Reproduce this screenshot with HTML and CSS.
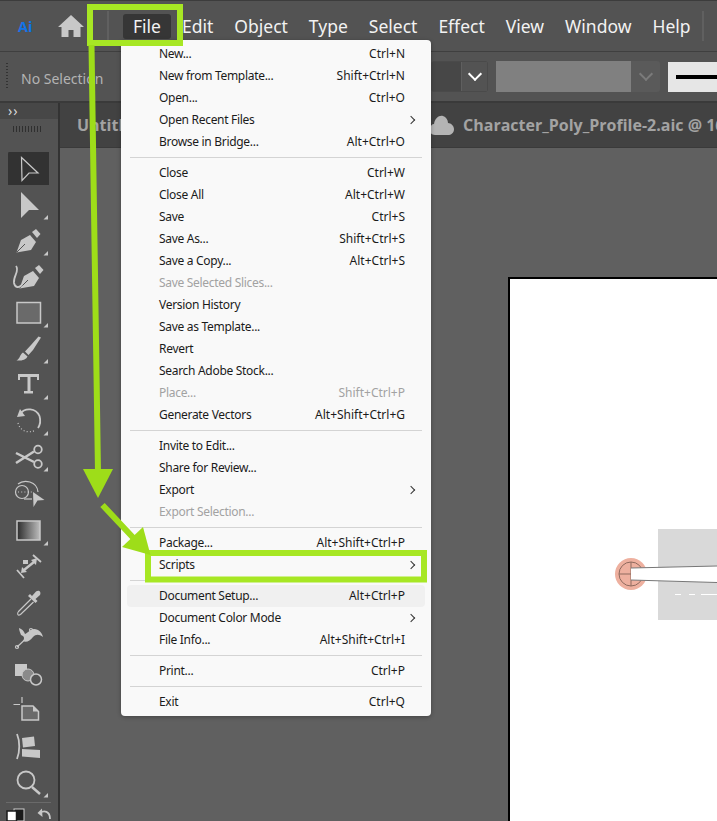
FILE: index.html
```html
<!DOCTYPE html>
<html>
    <head>
        <title>Illustrator File menu</title>
        <link rel="stylesheet" href="styles.css">
    </head>
    <body>
        <div id="app">
            <div class="top-bar">
                <span class="ai-logo">Ai</span>
                <svg class="home-icon" viewBox="0 0 26 22"><path d="M13 0 L26 12 L22.500 12 L22.500 22 L15.500 22 L15.500 15 L10.500 15 L10.500 22 L3.500 22 L3.500 12 L0 12 Z"/></svg>
                <span class="bar-sep"></span>
                <nav class="main-menu">
                    <span class="main-item active">File</span>
                    <span class="main-item">Edit</span>
                    <span class="main-item">Object</span>
                    <span class="main-item">Type</span>
                    <span class="main-item">Select</span>
                    <span class="main-item">Effect</span>
                    <span class="main-item">View</span>
                    <span class="main-item">Window</span>
                    <span class="main-item">Help</span>
                </nav>
                <span class="bar-sep end"></span>
            </div>

            <div class="options-bar">
                <span class="grip"></span>
                <span class="no-selection">No Selection</span>
                <div class="dropdown">
                    <span class="dropdown-chevron"></span>
                </div>
                <div class="style-field">
                    <span class="style-fill"></span>
                    <span class="style-button"><span class="dropdown-chevron off"></span></span>
                </div>
                <div class="stroke-box"><span class="stroke-line"></span></div>
            </div>

            <div class="main-row">
                <aside class="toolbar">
                    <div class="toolbar-head"><span class="collapse">&rsaquo;&rsaquo;</span></div>
                    <div class="toolbar-grip"></div>
                    <div class="tools">
                        <div class="tool selected">
                            <svg viewBox="8 151 42 36"><path class="line" d="M21.500 157.500 L38 173 L29 173 L22 180.500 Z"/></svg>
                        </div>
                        <div class="tool">
                            <svg viewBox="8 187 42 36"><path class="solid" d="M21 192 L39 210 L29 210 L21 218 Z"/><path class="solid" d="M43.500 219.500 L48 219.500 L48 215 Z"/></svg>
                        </div>
                        <div class="tool">
                            <svg viewBox="8 223 42 36"><path class="solid" d="M16.500 252.500 L21 240 L30 235 L36 242 L31 250 Z"/><path class="solid" d="M32 232 L36 229 L40.500 234 L37 238 Z"/><path class="cut" d="M17 252 L25 244"/><path class="solid" d="M43.500 255.500 L48 255.500 L48 251 Z"/></svg>
                        </div>
                        <div class="tool">
                            <svg viewBox="8 259 42 36"><path class="solid" d="M19.500 288.500 L24 276 L33 271 L39 278 L34 286 Z"/><path class="solid" d="M35 268 L39 265 L43.500 270 L40 274 Z"/><path class="cut" d="M20 288 L28 280"/><path class="line wide" d="M16 266 C20 271 13 276 14 283 C15 288 19 288 22 285"/></svg>
                        </div>
                        <div class="tool">
                            <svg viewBox="8 295 42 36"><rect class="box" x="17" y="302.500" width="23.500" height="20.500"/><path class="solid" d="M43.500 327.500 L48 327.500 L48 323 Z"/></svg>
                        </div>
                        <div class="tool">
                            <svg viewBox="8 331 42 36"><path class="solid" d="M38.500 336.500 L41 337.500 L33 350 L28.500 355 L25 351.500 L31 345 Z"/><path class="solid" d="M16.500 360.500 C20 359 20 354 23 352.500 L27.500 356.500 C26 360 21 361 16.500 360.500 Z"/><path class="solid" d="M43.500 363.500 L48 363.500 L48 359 Z"/></svg>
                        </div>
                        <div class="tool">
                            <svg viewBox="8 367 42 36"><path class="solid" d="M18 374 L39 374 L39 380 L37 380 L37 377 L30.500 377 L30.500 391 L33 391 L33 393.500 L24 393.500 L24 391 L27.500 391 L27.500 377 L20 377 L20 380 L18 380 Z"/><path class="solid" d="M43.500 399.500 L48 399.500 L48 395 Z"/></svg>
                        </div>
                        <div class="tool">
                            <svg viewBox="8 403 42 36"><path class="line wide" d="M20 414 C25 407 36 408 39.500 416 C41 421 40 425 38 428"/><path class="solid" d="M17 417 L20 409 L25 416 Z"/><path class="dots" d="M18 423 C20 431 28 434 36 430"/><path class="solid" d="M43.500 435.500 L48 435.500 L48 431 Z"/></svg>
                        </div>
                        <div class="tool">
                            <svg viewBox="8 439 42 36"><circle class="line wide" cx="38" cy="449.500" r="3.800"/><circle class="line wide" cx="38" cy="464" r="3.800"/><path class="thick" d="M16 463 L34 451.500 M16 453 L34 462"/><path class="solid" d="M43.500 471.500 L48 471.500 L48 467 Z"/></svg>
                        </div>
                        <div class="tool">
                            <svg viewBox="8 473 42 36"><circle class="line" cx="22" cy="490" r="6.500"/><path class="line" d="M18 482 C24 477 37 479 38 490"/><path class="line" d="M24 497 L32 497"/><path class="dots" d="M18 490 L34 490"/><path class="solid" d="M33 490 L44.500 498 L37.500 498.500 L33.500 505 Z"/></svg>
                        </div>
                        <div class="tool">
                            <svg viewBox="8 509 42 36"><defs><linearGradient id="tool-grad"><stop offset="0" stop-color="#2c2c2c"/><stop offset="1" stop-color="#bdbdbd"/></linearGradient></defs><rect class="box grad" x="17" y="519" width="23" height="19"/><path class="solid" d="M43.500 543.500 L48 543.500 L48 539 Z"/></svg>
                        </div>
                        <div class="tool">
                            <svg viewBox="8 545 42 36"><path class="line wide" d="M17 568 L24 576 M33 553 L41 560"/><path class="thick" d="M24 568 L34 560"/><path class="solid" d="M37 556 L36 563 L31 558 Z M21 571 L22 565 L27 570 Z"/><rect class="solid" x="23" y="558" width="5" height="4"/></svg>
                        </div>
                        <div class="tool">
                            <svg viewBox="8 581 42 36"><path class="line" d="M31 597 L18.500 609.500 C16.500 612 18 614 20.500 612.500 L33.500 600"/><path class="solid" d="M28 594 L30 592 L32 594 L36 589.500 C39 587.500 41.500 590 40 593 L35.500 597 L37.500 599 L35.500 601 Z"/></svg>
                        </div>
                        <div class="tool">
                            <svg viewBox="8 617 42 36"><path class="solid" d="M19 626 C22 627 24 629 25 632 C28 631 30 627 34 627 C39 627 42 631 43 635 C39 632 36 632 33 635 C30 639 26 641 23 639 C25 636 24 634 21 633 C20 630 19 628 19 626 Z"/><path class="line" d="M17 645 L31 632"/><circle class="line" cx="17" cy="645" r="1.500"/><circle class="line" cx="31" cy="628" r="1.500"/></svg>
                        </div>
                        <div class="tool">
                            <svg viewBox="8 653 42 36"><rect class="solid" x="15" y="662" width="12" height="12"/><circle class="mid" cx="28" cy="673" r="6"/><circle class="ring" cx="36" cy="677.500" r="5.500"/></svg>
                        </div>
                        <div class="tool">
                            <svg viewBox="8 689 42 36"><path class="line" d="M22 695 L22 701 M13.500 702.500 L20 702.500"/><path class="box" d="M22 704 L33 704 L38.500 709.500 L38.500 718 L22 718 Z"/><path class="solid" d="M33 704 L38.500 709.500 L33 709.500 Z"/></svg>
                        </div>
                        <div class="tool">
                            <svg viewBox="8 725 42 36"><path class="line wide" d="M17 732 C20 739 20 750 17 757"/><path class="solid" d="M22 736 L34 734.500 L35 744 L23 745.500 Z"/><path class="solid" d="M22 747 L40 748 L40 756 L22 754.500 Z"/></svg>
                        </div>
                        <div class="tool">
                            <svg viewBox="8 761 42 36"><circle class="line wide" cx="26" cy="778" r="8.500"/><path class="thick" d="M32 785 L40 792"/><path class="solid" d="M43.500 795.500 L48 795.500 L48 791 Z"/></svg>
                        </div>
                    </div>
                    <div class="toolbar-sep"></div>
                    <div class="swatches">
                        <svg class="fill-stroke" viewBox="6 806 20 15"><rect x="14" y="809" width="10" height="12" fill="#1a1a1a" stroke="#d0d0d0"/><rect x="7" y="811" width="9.500" height="10" fill="#fff" stroke="#1a1a1a" stroke-width="1.500"/></svg>
                        <svg class="undo" viewBox="36 808 16 13"><path class="line wide" d="M40 815 C44 812 50 813 50 821"/><path class="solid" d="M37.500 815 L42 810.500 L42.500 819 Z"/></svg>
                    </div>
                </aside>

                <section class="workspace">
                    <div class="tab-bar">
                        <span class="tab first">Untitled-1</span>
                        <svg class="cloud" viewBox="0 0 24 20"><path d="M5 20 C1 20 0 17 0 14 C0 11 2 9 4 9 C5 3 9 0 13 1 C16 2 18 5 18 8 C21 8 24 11 24 14 C24 18 21 20 18 20 Z"/></svg>
                        <span class="tab">Character_Poly_Profile-2.aic @ 16</span>
                    </div>
                    <div class="canvas">
                        <div class="artboard">
                            <div class="grey-shape"></div>
                            <svg class="handle" viewBox="0 0 105 40"><circle cx="16" cy="19" r="16" fill="#eeb09f"/><circle cx="16" cy="19" r="12" fill="none" stroke="#8f6a5e" stroke-width="1"/><path d="M4 19 L16 19 M16 7 L16 31" stroke="#8f6a5e" fill="none"/><path d="M16 13 L102 11 L102 27.500 L16 25 Z" fill="#fff"/><path d="M16 13 L102 11 M16 25 L102 27.500" stroke="#777" stroke-width="1" fill="none"/><path d="M60 39.500 L66 39.500 M74 39.500 L80 39.500 M86 39.500 L102 39.500" stroke="#fff" fill="none"/></svg>
                        </div>
                    </div>
                </section>
            </div>

            <div class="file-menu">
                <div class="item"><span>New...</span><span class="keys">Ctrl+N</span></div>
                <div class="item"><span>New from Template...</span><span class="keys">Shift+Ctrl+N</span></div>
                <div class="item"><span>Open...</span><span class="keys">Ctrl+O</span></div>
                <div class="item"><span>Open Recent Files</span><span class="more"></span></div>
                <div class="item"><span>Browse in Bridge...</span><span class="keys">Alt+Ctrl+O</span></div>
                <div class="sep"></div>
                <div class="item"><span>Close</span><span class="keys">Ctrl+W</span></div>
                <div class="item"><span>Close All</span><span class="keys">Alt+Ctrl+W</span></div>
                <div class="item"><span>Save</span><span class="keys">Ctrl+S</span></div>
                <div class="item"><span>Save As...</span><span class="keys">Shift+Ctrl+S</span></div>
                <div class="item"><span>Save a Copy...</span><span class="keys">Alt+Ctrl+S</span></div>
                <div class="item off"><span>Save Selected Slices...</span></div>
                <div class="item"><span>Version History</span></div>
                <div class="item"><span>Save as Template...</span></div>
                <div class="item"><span>Revert</span></div>
                <div class="item"><span>Search Adobe Stock...</span></div>
                <div class="item off"><span>Place...</span><span class="keys">Shift+Ctrl+P</span></div>
                <div class="item"><span>Generate Vectors</span><span class="keys">Alt+Shift+Ctrl+G</span></div>
                <div class="sep"></div>
                <div class="item"><span>Invite to Edit...</span></div>
                <div class="item"><span>Share for Review...</span></div>
                <div class="item"><span>Export</span><span class="more"></span></div>
                <div class="item off"><span>Export Selection...</span></div>
                <div class="sep"></div>
                <div class="item"><span>Package...</span><span class="keys">Alt+Shift+Ctrl+P</span></div>
                <div class="item"><span>Scripts</span><span class="more"></span></div>
                <div class="sep"></div>
                <div class="item hover"><span>Document Setup...</span><span class="keys">Alt+Ctrl+P</span></div>
                <div class="item"><span>Document Color Mode</span><span class="more"></span></div>
                <div class="item"><span>File Info...</span><span class="keys">Alt+Shift+Ctrl+I</span></div>
                <div class="sep"></div>
                <div class="item"><span>Print...</span><span class="keys">Ctrl+P</span></div>
                <div class="sep"></div>
                <div class="item"><span>Exit</span><span class="keys">Ctrl+Q</span></div>
            </div>

            <!-- green callouts drawn over the screenshot -->
            <svg class="callouts" viewBox="0 0 717 821">
                <rect class="frame" x="90" y="7" width="90" height="36"/>
                <path d="M91.500 45 L98 472 M102.500 505 L140 545"/>
                <rect class="frame" x="148" y="553" width="276" height="26.500"/>
                <path class="head" d="M83 469 L113 469 L98 498 Z"/>
                <path class="head" d="M143 527 L150.500 555 L122 547 Z"/>
            </svg>
        </div>
    </body>
</html>
```

FILE: styles.css
```css
*{
    box-sizing: border-box;
}
html, body{
    margin: 0;
    padding: 0;
}
#app{
    position: relative;
    display: flex;
    flex-direction: column;
    width: 717px;
    height: 821px;
    overflow: hidden;
    background-color: #606060;
    font-family: "Noto Sans", "Open Sans", sans-serif;
}

/* top menu bar */
.top-bar{
    display: flex;
    align-items: center;
    flex: none;
    height: 52px;
    background-color: #535353;
    border-top: 1px solid #3c3c3c;
    border-bottom: 1px solid #3f3f3f;
}
.ai-logo{
    flex: none;
    margin-left: 18px;
    width: 40px;
    color: #1473e6;
    font-family: "Open Sans", sans-serif;
    font-size: 14.500px;
    font-weight: 700;
}
.home-icon{
    flex: none;
    width: 26px;
    height: 22px;
    fill: #c8c8c8;
}
.bar-sep{
    flex: none;
    width: 2px;
    height: 30px;
    margin-left: 23px;
    background-color: #606060;
}
.bar-sep.end{
    margin-left: 1px;
}
.main-menu{
    display: flex;
    flex: none;
    margin-left: 14px;
    gap: 1px;
}
.main-item{
    padding: 0 10px;
    height: 25px;
    line-height: 25px;
    color: #f2f2f2;
    font-size: 17.500px;
    border-radius: 3px;
}
.main-item.active{
    background-color: #363636;
}

/* options bar */
.options-bar{
    display: flex;
    align-items: center;
    flex: none;
    height: 51px;
    background-color: #535353;
    border-bottom: 2px solid #3a3a3a;
}
.grip{
    width: 2px;
    height: 27px;
    margin-left: 6px;
    background-image: linear-gradient(#333 50%, transparent 50%);
    background-size: 2px 3px;
}
.no-selection{
    margin: 3px 0 0 13px;
    width: 410px;
    color: #b4b4b4;
    font-size: 14px;
}
.dropdown{
    display: flex;
    justify-content: flex-end;
    width: 57px;
    height: 31px;
    background-color: #474747;
    border: 1px solid #4a4a4a;
    border-radius: 3px;
}
.dropdown-chevron{
    display: block;
    position: relative;
    width: 26px;
    border-left: 1px solid #5f5f5f;
    background-color: #535353;
}
.dropdown-chevron::after{
    content: "";
    position: absolute;
    left: 8px;
    top: 7px;
    width: 8px;
    height: 8px;
    border-right: 2px solid #fff;
    border-bottom: 2px solid #fff;
    transform: rotate(45deg);
}
.dropdown-chevron.off{
    border: none;
    background: none;
    width: 29px;
    height: 31px;
}
.dropdown-chevron.off::after{
    left: 10px;
    top: 8px;
    border-color: #7b7b7b;
}
.style-field{
    display: flex;
    width: 164px;
    height: 31px;
    margin-left: 8px;
}
.style-fill{
    width: 135px;
    background-color: #808080;
}
.style-button{
    width: 29px;
    background-color: #5a5a5a;
    border-radius: 0 3px 3px 0;
}
.stroke-box{
    display: flex;
    align-items: center;
    flex: 1;
    height: 30px;
    margin-left: 8px;
    padding-left: 8px;
    background-color: #e6e6e6;
}
.stroke-line{
    display: block;
    width: 100%;
    height: 4px;
    background-color: #000;
}

/* left tools */
.main-row{
    display: flex;
    flex: 1;
    min-height: 0;
}
.toolbar{
    flex: none;
    width: 60px;
    background-color: #535353;
    border-right: 2px solid #333;
}
.toolbar-head{
    height: 16px;
    background-color: #474747;
}
.collapse{
    display: block;
    margin-left: 8px;
    color: #d8d8d8;
    font-size: 14px;
    line-height: 16px;
    letter-spacing: 1px;
}
.toolbar-grip{
    width: 29px;
    height: 6px;
    margin: 7px 0 0 13px;
    background-image: linear-gradient(90deg, #2f2f2f 1px, transparent 1px);
    background-size: 3px 6px;
}
.tools{
    margin-top: 19px;
    padding-left: 8px;
}
.tool{
    width: 42px;
    height: 36px;
}
.tool svg{
    display: block;
    width: 42px;
    height: 36px;
}
.tool.selected{
    background: linear-gradient(#323232, #323232) no-repeat 0 1px / 41px 33px;
    border-radius: 3px;
}
.solid{
    fill: #c8c8c8;
}
.line{
    fill: none;
    stroke: #c8c8c8;
    stroke-width: 1.200;
}
.line.wide{
    stroke-width: 1.800;
}
.thick{
    fill: none;
    stroke: #c8c8c8;
    stroke-width: 2.500;
}
.cut{
    fill: none;
    stroke: #535353;
    stroke-width: 1;
}
.dots{
    fill: none;
    stroke: #c8c8c8;
    stroke-width: 1.200;
    stroke-dasharray: 1 2.200;
}
.box{
    fill: #6a6a6a;
    stroke: #c8c8c8;
    stroke-width: 1.500;
}
.box.grad{
    fill: url(#tool-grad);
}
.mid{
    fill: #8a8a8a;
    stroke: #c8c8c8;
}
.ring{
    fill: #535353;
    stroke: #c8c8c8;
    stroke-width: 1.500;
}
.toolbar-sep{
    width: 45px;
    height: 1px;
    margin: 3px 0 0 6px;
    background-color: #6a6a6a;
}
.swatches{
    display: flex;
    justify-content: space-between;
    margin-top: 3px;
    padding: 0 6px;
}
.fill-stroke{
    width: 20px;
    height: 15px;
}
.undo{
    width: 16px;
    height: 13px;
}

/* document area */
.workspace{
    display: flex;
    flex-direction: column;
    flex: 1;
    min-width: 0;
}
.tab-bar{
    display: flex;
    align-items: center;
    flex: none;
    height: 45px;
    background-color: #424242;
    border-bottom: 1px solid #3a3a3a;
    white-space: nowrap;
    overflow: hidden;
}
.tab{
    flex: none;
    color: #a3a3a3;
    font-family: "Open Sans", sans-serif;
    font-size: 16px;
    font-weight: 700;
}
.tab.first{
    margin-left: 17px;
    width: 353px;
}
.cloud{
    flex: none;
    width: 24px;
    height: 20px;
    margin-right: 9px;
    fill: #b4b4b4;
}
.canvas{
    position: relative;
    flex: 1;
}
.artboard{
    position: absolute;
    left: 448px;
    top: 129px;
    width: 300px;
    height: 700px;
    background-color: #fff;
    border: 2px solid #000;
}
.grey-shape{
    position: absolute;
    left: 148px;
    top: 250px;
    width: 100px;
    height: 91px;
    background-color: #d9d9d9;
}
.handle{
    position: absolute;
    left: 105px;
    top: 276px;
    width: 105px;
    height: 40px;
}

/* file dropdown */
.file-menu{
    position: absolute;
    left: 121px;
    top: 40px;
    width: 310px;
    height: 676px;
    padding: 3px 6px;
    background-color: #f9f9f9;
    border-radius: 4px;
    box-shadow: 0 1px 4px rgba(0, 0, 0, 0.3);
    color: #1b1b1b;
    font-size: 12px;
}
.item{
    display: flex;
    justify-content: space-between;
    align-items: center;
    position: relative;
    height: 22px;
    padding: 0 20px 2px 32px;
    border-radius: 4px;
    letter-spacing: -0.3px;
    white-space: nowrap;
}
.keys{
    letter-spacing: 0;
}
.item.off{
    color: #a2a2a2;
}
.item.hover{
    background-color: #f0f0f0;
}
.sep{
    height: 1px;
    margin: 4px 3px;
    background-color: #d4d4d4;
}
.more{
    position: absolute;
    right: 11px;
    top: 8px;
    width: 6px;
    height: 6px;
    border-top: 1px solid #333;
    border-right: 1px solid #333;
    transform: rotate(45deg);
}

/* green annotation */
.callouts{
    position: absolute;
    left: 0;
    top: 0;
    width: 717px;
    height: 821px;
    fill: none;
    stroke: #9edd19;
    stroke-width: 6;
}
.callouts .frame{
    stroke: #a7e724;
}
.callouts .head{
    fill: #9edd19;
    stroke: none;
}
```
